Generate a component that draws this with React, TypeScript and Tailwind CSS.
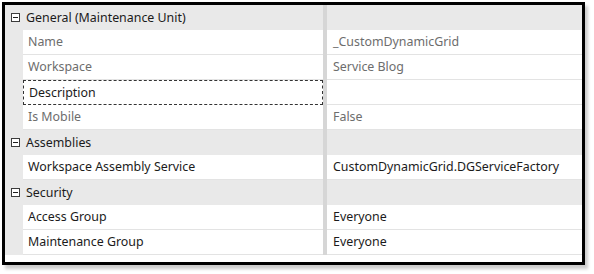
type Prop = { name: string; value: string; readOnly?: boolean; focused?: boolean };
type Category = { title: string; props: Prop[] };

const categories: Category[] = [
  {
    title: 'General (Maintenance Unit)',
    props: [
      { name: 'Name', value: '_CustomDynamicGrid', readOnly: true },
      { name: 'Workspace', value: 'Service Blog', readOnly: true },
      { name: 'Description', value: '', focused: true },
      { name: 'Is Mobile', value: 'False', readOnly: true },
    ],
  },
  {
    title: 'Assemblies',
    props: [{ name: 'Workspace Assembly Service', value: 'CustomDynamicGrid.DGServiceFactory' }],
  },
  {
    title: 'Security',
    props: [
      { name: 'Access Group', value: 'Everyone' },
      { name: 'Maintenance Group', value: 'Everyone' },
    ],
  },
];

function CollapseBox() {
  return (
    <span className="flex h-[9px] w-[9px] items-center justify-center border border-[#3c3c3c] bg-white">
      <span className="h-px w-[5px] bg-[#1e1e1e]" />
    </span>
  );
}

function Splitter() {
  return <div className="w-[4px] shrink-0 self-stretch bg-[#d6d6d6]" />;
}

export default function App() {
  return (
    <div className="h-[274px] w-[594px] bg-white p-[2px]" style={{ fontFamily: '"Noto Sans", "Open Sans", sans-serif' }}>
      <div className="flex h-[263px] w-[583px] flex-col border-[3px] border-black bg-white text-[12.4px] shadow-[3px_4px_3px_rgba(0,0,0,0.2)]">
        {categories.map(cat => (
          <div key={cat.title}>
            <div className="flex h-[25px] bg-[#e9e9e9]">
              <div className="flex w-[318px] shrink-0 items-center gap-[6px] pl-[6px] text-[#1b1b1b]">
                <CollapseBox />
                <span className="pt-px">{cat.title}</span>
              </div>
              <Splitter />
              <div className="flex-1" />
            </div>
            {cat.props.map(p => (
              <div key={p.name} className="flex h-[25px] bg-[#e9e9e9]">
                <div className="w-[18px] shrink-0" />
                <div className="flex flex-1 bg-white">
                  <div
                    className={`flex w-[300px] shrink-0 items-center pl-[5px] pt-px ${
                      p.focused ? 'border border-dashed border-[#333]' : 'border-b border-[#e3e3e3]'
                    } ${p.readOnly ? 'text-[#6d6d6d]' : 'text-[#1b1b1b]'}`}
                  >
                    {p.name}
                  </div>
                  <Splitter />
                  <div
                    className={`flex flex-1 items-center border-b border-[#e3e3e3] pl-[6px] pt-px ${
                      p.readOnly ? 'text-[#6d6d6d]' : 'text-[#1b1b1b]'
                    }`}
                  >
                    {p.value}
                  </div>
                </div>
              </div>
            ))}
          </div>
        ))}
        <div className="flex-1 bg-white" />
      </div>
    </div>
  );
}
